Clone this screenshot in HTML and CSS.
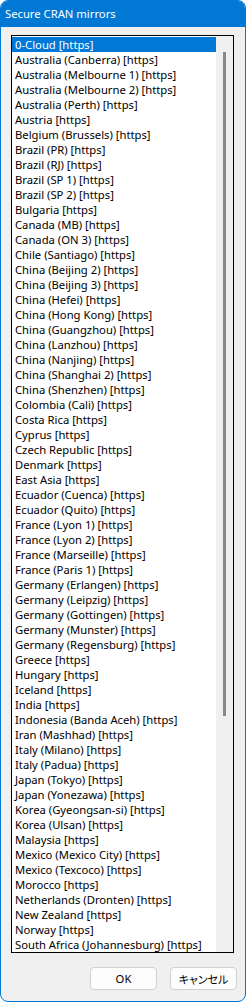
FILE: index.html
```html
<!DOCTYPE html>
<html>
<head>
<meta charset="utf-8">
<link rel="stylesheet" href="styles.css">
</head>
<body>
<div class="window">
  <div class="titlebar">Secure CRAN mirrors</div>
  <div class="client">
    <div class="listbox">
      <ul class="items">
        <li class="selected">0-Cloud [https]</li>
        <li>Australia (Canberra) [https]</li>
        <li>Australia (Melbourne 1) [https]</li>
        <li>Australia (Melbourne 2) [https]</li>
        <li>Australia (Perth) [https]</li>
        <li>Austria [https]</li>
        <li>Belgium (Brussels) [https]</li>
        <li>Brazil (PR) [https]</li>
        <li>Brazil (RJ) [https]</li>
        <li>Brazil (SP 1) [https]</li>
        <li>Brazil (SP 2) [https]</li>
        <li>Bulgaria [https]</li>
        <li>Canada (MB) [https]</li>
        <li>Canada (ON 3) [https]</li>
        <li>Chile (Santiago) [https]</li>
        <li>China (Beijing 2) [https]</li>
        <li>China (Beijing 3) [https]</li>
        <li>China (Hefei) [https]</li>
        <li>China (Hong Kong) [https]</li>
        <li>China (Guangzhou) [https]</li>
        <li>China (Lanzhou) [https]</li>
        <li>China (Nanjing) [https]</li>
        <li>China (Shanghai 2) [https]</li>
        <li>China (Shenzhen) [https]</li>
        <li>Colombia (Cali) [https]</li>
        <li>Costa Rica [https]</li>
        <li>Cyprus [https]</li>
        <li>Czech Republic [https]</li>
        <li>Denmark [https]</li>
        <li>East Asia [https]</li>
        <li>Ecuador (Cuenca) [https]</li>
        <li>Ecuador (Quito) [https]</li>
        <li>France (Lyon 1) [https]</li>
        <li>France (Lyon 2) [https]</li>
        <li>France (Marseille) [https]</li>
        <li>France (Paris 1) [https]</li>
        <li>Germany (Erlangen) [https]</li>
        <li>Germany (Leipzig) [https]</li>
        <li>Germany (Gottingen) [https]</li>
        <li>Germany (Munster) [https]</li>
        <li>Germany (Regensburg) [https]</li>
        <li>Greece [https]</li>
        <li>Hungary [https]</li>
        <li>Iceland [https]</li>
        <li>India [https]</li>
        <li>Indonesia (Banda Aceh) [https]</li>
        <li>Iran (Mashhad) [https]</li>
        <li>Italy (Milano) [https]</li>
        <li>Italy (Padua) [https]</li>
        <li>Japan (Tokyo) [https]</li>
        <li>Japan (Yonezawa) [https]</li>
        <li>Korea (Gyeongsan-si) [https]</li>
        <li>Korea (Ulsan) [https]</li>
        <li>Malaysia [https]</li>
        <li>Mexico (Mexico City) [https]</li>
        <li>Mexico (Texcoco) [https]</li>
        <li>Morocco [https]</li>
        <li>Netherlands (Dronten) [https]</li>
        <li>New Zealand [https]</li>
        <li>Norway [https]</li>
        <li>South Africa (Johannesburg) [https]</li>
      </ul>
      <div class="scrollbar"><div class="thumb"></div></div>
    </div>
    <div class="buttons">
      <button class="btn">OK</button>
      <button class="btn btn-ja">キャンセル</button>
    </div>
  </div>
</div>
</body>
</html>
```
FILE: styles.css
```css
html, body {
  margin: 0;
  padding: 0;
  background: #ffffff;
}
body {
  font-family: "Noto Sans", "Liberation Sans", "Noto Sans CJK JP", sans-serif;
  font-size: 11.25px;
}
.window {
  width: 246px;
  height: 1002px;
  box-sizing: border-box;
  border: 1px solid #0078d4;
  border-radius: 8px;
  background: #f0f0f0;
  overflow: hidden;
  display: flex;
  flex-direction: column;
}
.titlebar {
  height: 26px;
  background: #0078d4;
  color: #ffffff;
  font-size: 11.25px;
  line-height: 25px;
  padding-left: 4px;
  flex: none;
}
.client {
  flex: 1;
  display: flex;
  flex-direction: column;
  padding: 8px 0 0 10px;
}
.listbox {
  width: 223px;
  height: 918px;
  box-sizing: border-box;
  border: 1px solid #000000;
  background: #ffffff;
  display: flex;
}
.items {
  list-style: none;
  margin: 0;
  padding: 1px 0 0 0;
  flex: 1;
  overflow: hidden;
}
.items li {
  height: 15px;
  line-height: 15px;
  padding-left: 3px;
  color: #000000;
  white-space: nowrap;
}
.items li.selected {
  background: #0078d7;
  color: #ffffff;
}
.scrollbar {
  width: 17px;
  flex: none;
  background: #f0f0f0;
  display: flex;
  justify-content: center;
  padding-top: 16px;
}
.thumb {
  width: 3px;
  height: 664px;
  background: #8a8a8a;
}
.buttons {
  display: flex;
  gap: 13px;
  padding-left: 79px;
  margin-top: 14px;
}
.btn {
  width: 67px;
  height: 23px;
  box-sizing: border-box;
  border: 1px solid #d0d0d0;
  border-radius: 4px;
  background: #fdfdfd;
  color: #000000;
  font-family: "Noto Sans", "Noto Sans CJK JP", sans-serif;
  font-size: 11.25px;
  padding: 0;
}
.btn-ja {
  font-family: "Noto Sans CJK JP", sans-serif;
  font-size: 11px;
  font-feature-settings: "palt";
}
```
